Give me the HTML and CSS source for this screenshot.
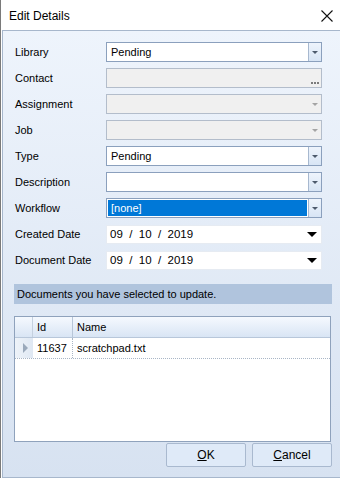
FILE: index.html
```html
<!DOCTYPE html>
<html lang="en">
<head>
    <meta charset="UTF-8">
    <title>Edit Details</title>
    <link rel="stylesheet" href="styles.css">
</head>
<body>
    <div class="window">
        <div class="titlebar">
            <span class="title">Edit Details</span>
            <svg class="close" width="12" height="12" viewBox="0 0 12 12">
                <path d="M0.5 0.5 L11.5 11.5 M11.5 0.5 L0.5 11.5" stroke="#111" stroke-width="1.1" fill="none"/>
            </svg>
        </div>

        <div class="panel">
            <div class="fields">
                <div class="row">
                    <label>Library</label>
                    <div class="combo"><span class="value">Pending</span><span class="drop"><i class="tri"></i></span></div>
                </div>
                <div class="row">
                    <label>Contact</label>
                    <div class="combo disabled"><span class="value"></span><span class="dots"><i></i><i></i><i></i></span></div>
                </div>
                <div class="row">
                    <label>Assignment</label>
                    <div class="combo disabled"><span class="value"></span><span class="drop flat"><i class="tri light"></i></span></div>
                </div>
                <div class="row">
                    <label>Job</label>
                    <div class="combo disabled"><span class="value"></span><span class="drop flat"><i class="tri light"></i></span></div>
                </div>
                <div class="row">
                    <label>Type</label>
                    <div class="combo"><span class="value">Pending</span><span class="drop"><i class="tri"></i></span></div>
                </div>
                <div class="row">
                    <label>Description</label>
                    <div class="combo"><span class="value"></span><span class="drop"><i class="tri"></i></span></div>
                </div>
                <div class="row">
                    <label>Workflow</label>
                    <div class="combo"><span class="value selected">[none]</span><span class="drop"><i class="tri"></i></span></div>
                </div>
                <div class="row">
                    <label>Created Date</label>
                    <div class="date"><span>09&nbsp;&nbsp;/&nbsp;&nbsp;10&nbsp;&nbsp;/&nbsp;&nbsp;2019</span><i class="tri dark"></i></div>
                </div>
                <div class="row">
                    <label>Document Date</label>
                    <div class="date"><span>09&nbsp;&nbsp;/&nbsp;&nbsp;10&nbsp;&nbsp;/&nbsp;&nbsp;2019</span><i class="tri dark"></i></div>
                </div>
            </div>

            <div class="banner">Documents you have selected to update.</div>

            <div class="grid">
                <div class="grid-head">
                    <div class="cell ind"></div>
                    <div class="cell id">Id</div>
                    <div class="cell name">Name</div>
                </div>
                <div class="grid-row">
                    <div class="cell ind"><i class="arrow"></i></div>
                    <div class="cell id">11637</div>
                    <div class="cell name">scratchpad.txt</div>
                </div>
            </div>

            <div class="buttons">
                <button><u>O</u>K</button>
                <button><u>C</u>ancel</button>
            </div>
        </div>
    </div>
</body>
</html>
```

FILE: styles.css
```css
body {
    margin: 0;
    font-family: "Liberation Sans", Arial, sans-serif;
    font-size: 11px;
    color: #000;
    background: #fff;
}
.window {
    width: 340px;
    height: 478px;
    border-left: 1px solid #7a7a7a;
    box-sizing: border-box;
    display: flex;
    flex-direction: column;
}
.titlebar {
    height: 30px;
    display: flex;
    align-items: center;
    justify-content: space-between;
    padding: 0 7px 0 8px;
    background: #fff;
    flex-shrink: 0;
}
.title {
    font-size: 12px;
    margin-top: 1px;
}
.close {
    margin-top: 1px;
}
.panel {
    flex: 1;
    margin-left: 1px;
    border-top: 1px solid #a7b7cc;
    border-left: 1px solid #a7b7cc;
    border-bottom: 1px solid #a7b7cc;
    background: linear-gradient(#eef4fc, #d7e2f1);
    padding: 11px 0 0 11px;
    display: flex;
    flex-direction: column;
}
.fields {
    display: flex;
    flex-direction: column;
    gap: 6px;
}
.row {
    display: flex;
    align-items: center;
    height: 20px;
}
.row label {
    width: 91px;
    padding-left: 1px;
}
.combo {
    width: 216px;
    height: 20px;
    box-sizing: border-box;
    border: 1px solid #8ba0bd;
    background: #fff;
    display: flex;
}
.combo .value {
    flex: 1;
    padding-left: 4px;
    line-height: 18px;
}
.combo .value.selected {
    background: #0078d7;
    color: #fff;
    margin: 1px;
    line-height: 16px;
    padding-left: 3px;
}
.combo .drop {
    width: 12px;
    border-left: 1px solid #a7b8cf;
    background: linear-gradient(#eef4fc, #d8e5f5);
    display: flex;
    align-items: center;
    justify-content: center;
}
.combo.disabled {
    background: #f0f0f0;
    border-color: #b3bdcb;
}
.combo .drop.flat {
    border-left: none;
    background: transparent;
}
.dots {
    display: flex;
    align-items: flex-end;
    gap: 1px;
    padding: 0 2px 3px 0;
}
.dots i {
    width: 2px;
    height: 2px;
    background: #7c7c7c;
}
.tri {
    width: 0;
    height: 0;
    border-left: 3px solid transparent;
    border-right: 3px solid transparent;
    border-top: 3px solid #4d5a6c;
    margin-top: 1px;
}
.tri.light {
    border-top-color: #a4a4a4;
}
.tri.dark {
    border-left-width: 5px;
    border-right-width: 5px;
    border-top: 5px solid #000;
    margin-right: 4px;
}
.date {
    width: 216px;
    height: 19px;
    box-sizing: border-box;
    background: #fff;
    border: 1px solid #e6ebf2;
    display: flex;
    align-items: center;
    justify-content: space-between;
    padding-left: 3px;
    font-size: 11.5px;
}
.banner {
    margin-top: 14px;
    width: 318px;
    height: 20px;
    line-height: 20px;
    background: #b0c4dd;
    padding-left: 3px;
    box-sizing: border-box;
}
.grid {
    margin-top: 12px;
    width: 317px;
    height: 126px;
    box-sizing: border-box;
    border: 1px solid #8fa2bc;
    background: #fff;
}
.grid-head {
    display: flex;
    height: 20px;
    background: linear-gradient(#f5f9fe, #d9e5f4);
    border-bottom: 1px solid #b8c7da;
}
.grid-row {
    display: flex;
    height: 20px;
    border-bottom: 1px dotted #a9b6c6;
}
.cell {
    line-height: 20px;
    box-sizing: border-box;
}
.cell.ind {
    width: 18px;
    border-right: 1px solid #c5d1df;
    display: flex;
    align-items: center;
    justify-content: center;
}
.grid-row .cell.ind {
    background: linear-gradient(90deg, #eef3f9, #dfe8f3);
    border-right: none;
}
.cell.id {
    width: 40px;
    padding-left: 4px;
    border-right: 1px solid #b8c6d8;
}
.grid-row .cell.id {
    border-right: 1px dotted #a9b6c6;
}
.cell.name {
    padding-left: 4px;
}
.arrow {
    width: 0;
    height: 0;
    border-top: 5px solid transparent;
    border-bottom: 5px solid transparent;
    border-left: 5px solid #9aa9bb;
    margin-left: 2px;
}
.buttons {
    display: flex;
    justify-content: flex-end;
    gap: 6px;
    width: 318px;
    margin-top: 1px;
}
button {
    width: 80px;
    height: 24px;
    font-family: "Liberation Sans", Arial, sans-serif;
    font-size: 12px;
    color: #000;
    background: #dfeaf8;
    border: 1px solid #a9b9cf;
    border-radius: 2px;
    padding: 0;
}
```
